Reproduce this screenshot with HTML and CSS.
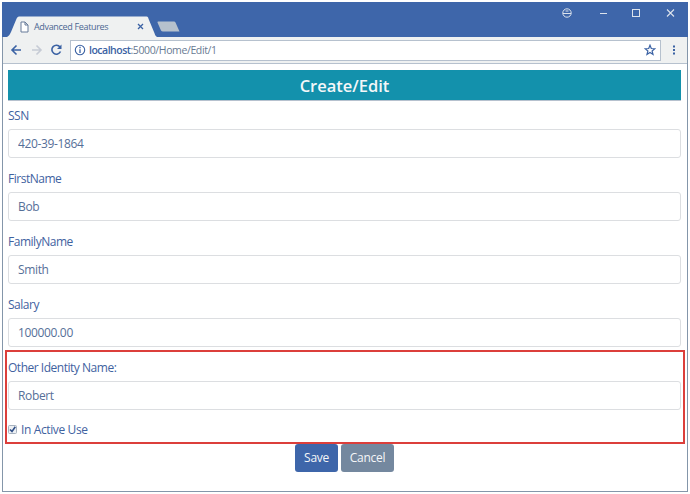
FILE: index.html
```html
<!DOCTYPE html>
<html lang="en">
<head>
<meta charset="utf-8">
<title>Advanced Features</title>
<link rel="stylesheet" href="styles.css">
</head>
<body>
<div class="window">
  <header class="titlebar">
    <div class="tab">
      <svg class="tab-shape" width="150" height="21" viewBox="0 0 150 21"><path d="M0 21C2 20 3 18 4 16L9 4C10 1 11 .5 12 .5H139C141 .5 141 1 142 4L147 16C148 18 148 20 150 21Z" fill="#eff1f1"/></svg>
      <svg class="page-icon" width="9" height="12" viewBox="0 0 9 12"><path d="M1 1H5L8 4V11H1ZM5 1V4H8" fill="#fff" stroke="#667b99"/></svg>
      <span class="tab-title">Advanced Features</span>
      <svg class="tab-close" width="7" height="7" viewBox="0 0 7 7"><path d="M1 1L6 6M6 1L1 6" stroke="#3b62a4" stroke-width="1.3"/></svg>
    </div>
    <svg class="new-tab" width="23" height="11" viewBox="0 0 23 11"><path d="M1 .5H17Q18 .5 18.5 1.5L22.5 10.5H6Q4.500 10.500 4 9.500L.7 2Q0 .5 1 .5Z" fill="#b6c1cd"/></svg>
    <svg class="controls" width="124" height="12" viewBox="0 0 124 12" fill="none" stroke="#dce3ec">
      <circle cx="6" cy="6" r="4.200"/><path d="M2 6.500H10M4.500 4H7.500"/>
      <path d="M39 6.500H46"/>
      <rect x="71.500" y="2.500" width="7" height="7"/>
      <path d="M106 2.500L113 9.500M113 2.500L106 9.500" stroke-width="1.100"/>
    </svg>
  </header>
  <div class="toolbar">
    <svg class="nav" width="54" height="14" viewBox="0 0 54 14" fill="none" stroke-width="1.600">
      <path d="M11 7H2M6.500 2.500L2 7L6.500 11.500" stroke="#3b62a4"/>
      <path d="M22 7H31M26.500 2.500L31 7L26.500 11.500" stroke="#c6cbd5"/>
      <path d="M50 4A4.500 4.500 0 1 0 50.500 8.500" stroke="#3b62a4"/><path d="M51.500 1.500V6H47Z" fill="#3b62a4"/>
    </svg>
    <div class="address">
      <svg width="12" height="12" viewBox="0 0 12 12"><circle cx="6" cy="6" r="4.700" fill="none" stroke="#3b62a4" stroke-width="1.100"/><path d="M6 5.200V9M6 2.800V4.200" stroke="#3b62a4" stroke-width="1.300"/></svg>
      <span class="url"><b>localhost</b>:5000/Home/Edit/1</span>
      <svg class="star" width="12" height="12" viewBox="0 0 12 12"><path d="M6 1.200L7.300 4.500L10.900 4.700L8.100 7L9 10.500L6 8.500L3 10.500L3.900 7L1.100 4.700L4.700 4.500Z" fill="none" stroke="#3b62a4" stroke-width="1.200"/></svg>
    </div>
    <svg class="more" width="4" height="12" viewBox="0 0 4 12" fill="#3b62a4"><path d="M1 1.500H3V3.500H1ZM1 5H3V7H1ZM1 8.500H3V10.500H1Z"/></svg>
  </div>
  <main class="page">
    <h1 class="heading"><span>Create/Edit</span></h1>
    <form>
      <div class="group"><label for="ssn">SSN</label><input id="ssn" value="420-39-1864"></div>
      <div class="group"><label for="first">FirstName</label><input id="first" value="Bob"></div>
      <div class="group"><label for="family">FamilyName</label><input id="family" value="Smith"></div>
      <div class="group"><label for="salary">Salary</label><input id="salary" value="100000.00"></div>
      <section class="identity">
        <div class="group"><label for="other">Other Identity Name:</label><input id="other" value="Robert"></div>
        <div class="check">
          <svg width="9" height="9" viewBox="0 0 9 9"><rect x=".5" y=".5" width="8" height="8" rx="1" fill="#edf0f3" stroke="#a7b2bf"/><path d="M2 4.500L4 6.500L7.300 1.800" fill="none" stroke="#304f87" stroke-width="1.600"/></svg>
          <span>In Active Use</span>
        </div>
      </section>
      <div class="actions"><button class="save" type="button">Save</button><button class="cancel" type="button">Cancel</button></div>
    </form>
  </main>
</div>
</body>
</html>
```
FILE: styles.css
```css
* { box-sizing: border-box; }
body { margin: 0; background: #fff; font: 500 12px/18px "Open Sans", "Noto Sans", sans-serif; color: #3f629f; }
svg { display: block; flex: none; }
.window { width: 686px; height: 490px; margin: 2px; border: 1px solid #8496aa; border-top: 0; background: #fff; }
.titlebar { height: 35px; margin: 0 -1px; background: #3e66aa; display: flex; align-items: flex-end; position: relative; }
.tab { width: 150px; height: 21px; margin-left: 5px; display: flex; align-items: center; position: relative; padding-left: 13px; }
.tab-shape { position: absolute; left: 0; top: 0; }
.page-icon, .tab-title, .tab-close { position: relative; }
.tab-title { margin-left: 5px; width: 74px; font-size: 9px; letter-spacing: -.33px; white-space: nowrap; color: #4c6791; }
.tab-close { margin-left: 29px; }
.new-tab { margin: 0 0 5px 0; }
.controls { position: absolute; right: 3px; top: 5px; }
.toolbar { height: 27px; background: #eff1f1; border-bottom: 1px solid #b6c1ce; display: flex; align-items: center; padding: 0 11px 0 7px; }
.nav { margin-right: 6px; }
.address { flex: 1; height: 21px; border: 1px solid #b6c1ce; background: #fff; display: flex; align-items: center; padding: 0 4px 0 3px; }
.url { margin-left: 3px; font-size: 10.500px; letter-spacing: -.38px; color: #687a92; flex: 1; white-space: nowrap; }
.url b { font-weight: 600; letter-spacing: -.5px; color: #3b62a4; }
.more { margin-left: 11px; }
.page { padding: 6px 6px 0 5px; }
.heading { margin: 0; height: 31px; background: #1391ac; border-bottom: 1px solid #b6c1ce; color: #f4f7f9; font-size: 16.500px; line-height: 32px; font-weight: 600; text-align: center; }
form { padding-top: 1px; }
.group { height: 63px; }
label { display: block; height: 27px; line-height: 27px; letter-spacing: -.48px; }
input { display: block; width: 100%; height: 29px; border: 1px solid #dcdee1; border-radius: 3px; padding: 0 8px 0 9px; font: inherit; letter-spacing: -.35px; color: #566f98; background: #fff; outline: 0; }
.identity { height: 94px; margin: -4px -4px 0 -3px; border: 2px solid #dc3f3b; padding: 2px 2px 0 1px; }
.check { display: flex; align-items: center; gap: 4px; height: 25px; letter-spacing: -.38px; }
.actions { display: flex; justify-content: center; gap: 3px; }
button { height: 28px; border: 0; border-radius: 3px; font: inherit; letter-spacing: -.3px; color: #f4f6f8; padding: 0; }
.save { width: 43px; background: #3e66aa; }
.cancel { width: 53px; background: #74889f; }
```
